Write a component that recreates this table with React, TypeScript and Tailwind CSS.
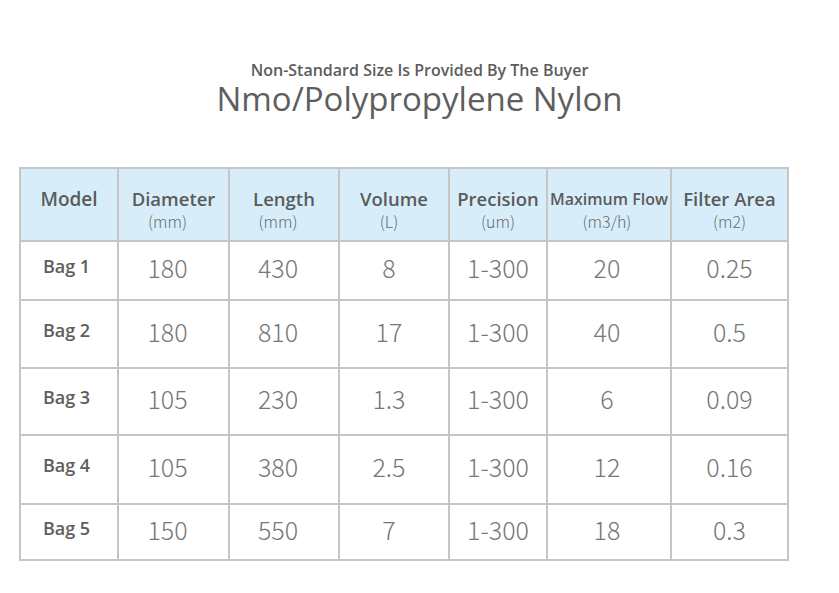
const COLS = [
  { title: 'Model', unit: '', w: 'w-[98px]', tsize: 'text-[19px]', shift: '' },
  { title: 'Diameter', unit: '(mm)', w: 'w-[111px]', tsize: 'text-[18.5px]', shift: 'pr-[12px]' },
  { title: 'Length', unit: '(mm)', w: 'w-[110px]', tsize: 'text-[18.5px]', shift: 'pr-[12px]' },
  { title: 'Volume', unit: '(L)', w: 'w-[110px]', tsize: 'text-[18.5px]', shift: 'pr-[10px]' },
  { title: 'Precision', unit: '(um)', w: 'w-[98px]', tsize: 'text-[18.5px]', shift: '' },
  { title: 'Maximum Flow', unit: '(m3/h)', w: 'w-[124px]', tsize: 'text-[16px]', shift: 'pr-[4px]' },
  { title: 'Filter Area', unit: '(m2)', w: 'w-[117px]', tsize: 'text-[18.5px]', shift: '' },
];

const ROWS = [
  { h: 'h-[59px]', cells: ['Bag 1', '180', '430', '8', '1-300', '20', '0.25'] },
  { h: 'h-[68px]', cells: ['Bag 2', '180', '810', '17', '1-300', '40', '0.5'] },
  { h: 'h-[67px]', cells: ['Bag 3', '105', '230', '1.3', '1-300', '6', '0.09'] },
  { h: 'h-[69px]', cells: ['Bag 4', '105', '380', '2.5', '1-300', '12', '0.16'] },
  { h: 'h-[56px]', cells: ['Bag 5', '150', '550', '7', '1-300', '18', '0.3'] },
];

export default function App() {
  return (
    <div className="min-h-screen w-[839px] h-[593px] bg-white font-['Open_Sans',sans-serif]">
      <div className="flex flex-col items-center pt-[60px]">
        <p className="text-[16px] leading-[20px] font-semibold text-[#5c5c5c]">
          Non-Standard Size Is Provided By The Buyer
        </p>
        <h1 className="text-[33px] leading-[38px] font-normal text-[#5e5e5e]">
          Nmo/Polypropylene Nylon
        </h1>
      </div>

      <div className="ml-[19px] mt-[49px] w-[770px] border-l-2 border-t-2 border-[#c6c6c6]">
        {/* header */}
        <div className="flex h-[73px] bg-[#d7eefa]">
          {COLS.map((c) => (
            <div
              key={c.title}
              className={`${c.w} shrink-0 border-r-2 border-b-2 border-[#c6c6c6] flex flex-col items-center pt-[19px]`}
            >
              <span className={`${c.tsize} leading-[22px] font-semibold text-[#5b5b5b] whitespace-nowrap`}>
                {c.title}
              </span>
              {c.unit && (
                <span className={`${c.shift} text-[16px] leading-[22px] text-[#6a6a6a] font-['Noto_Sans_CJK_SC',sans-serif] font-light`}>
                  {c.unit}
                </span>
              )}
            </div>
          ))}
        </div>

        {ROWS.map((r) => (
          <div key={r.cells[0]} className={`flex ${r.h}`}>
            {r.cells.map((v, i) => (
              <div
                key={i}
                className={`${COLS[i].w} shrink-0 border-r-2 border-b-2 border-[#c6c6c6] flex items-center justify-center`}
              >
                {i === 0 ? (
                  <span className="text-[18px] font-semibold text-[#5e5e5e] pr-[5px] pb-[8px]">{v}</span>
                ) : (
                  <span className={`${COLS[i].shift} pb-[5px] text-[25px] font-light text-[#777777] font-['Noto_Sans_CJK_SC',sans-serif]`}>
                    {v}
                  </span>
                )}
              </div>
            ))}
          </div>
        ))}
      </div>
    </div>
  );
}
